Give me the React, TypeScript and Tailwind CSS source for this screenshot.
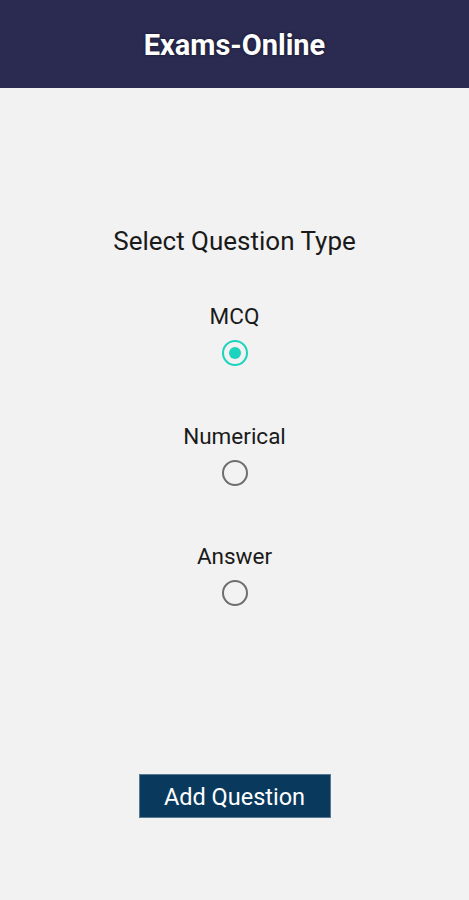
import { useState } from "react";

const tipos = ["MCQ", "Numerical", "Answer"];

function Radio({ checked }: { checked: boolean }) {
  return (
    <span
      className={
        checked
          ? "flex items-center justify-center w-[26px] h-[26px] ml-[2px] rounded-full border-[2.5px] border-[#1cd3bd]"
          : "flex items-center justify-center w-[26px] h-[26px] ml-[2px] rounded-full border-2 border-[#6e6e6e]"
      }
    >
      {checked && <span className="w-[12px] h-[12px] rounded-full bg-[#1cd3bd]" />}
    </span>
  );
}

export default function App() {
  const [tipo, setTipo] = useState("MCQ");

  return (
    <div
      className="w-[469px] h-[900px] bg-[#f2f2f2] flex flex-col"
      style={{ fontFamily: "Roboto, 'Liberation Sans', sans-serif" }}
    >
      {/* Header */}
      <header className="h-[88px] bg-[#2b2b52] flex items-center justify-center">
        <h1 className="text-white text-[29px] leading-[34px] font-bold mt-[2px] [text-shadow:0_0_3px_rgba(0,0,0,0.6)]">
          Exams-Online
        </h1>
      </header>

      {/* Conteudo */}
      <main className="flex flex-col items-center">
        <h2 className="mt-[138px] text-[26px] leading-[30px] text-[#1a1a1a]">Select Question Type</h2>

        <div className="mt-[47px] flex flex-col items-center gap-[57px]">
          {tipos.map((t) => (
            <button
              key={t}
              onClick={() => setTipo(t)}
              className="flex flex-col items-center gap-[11px]"
            >
              <span className="text-[22.5px] leading-[26px] text-[#1a1a1a]">{t}</span>
              <Radio checked={tipo === t} />
            </button>
          ))}
        </div>

        <button className="mt-[168px] w-[192px] h-[44px] pt-[3px] bg-[#093a5e] text-white text-[23.5px] border border-[#cfd8de]/40">
          Add Question
        </button>
      </main>
    </div>
  );
}
